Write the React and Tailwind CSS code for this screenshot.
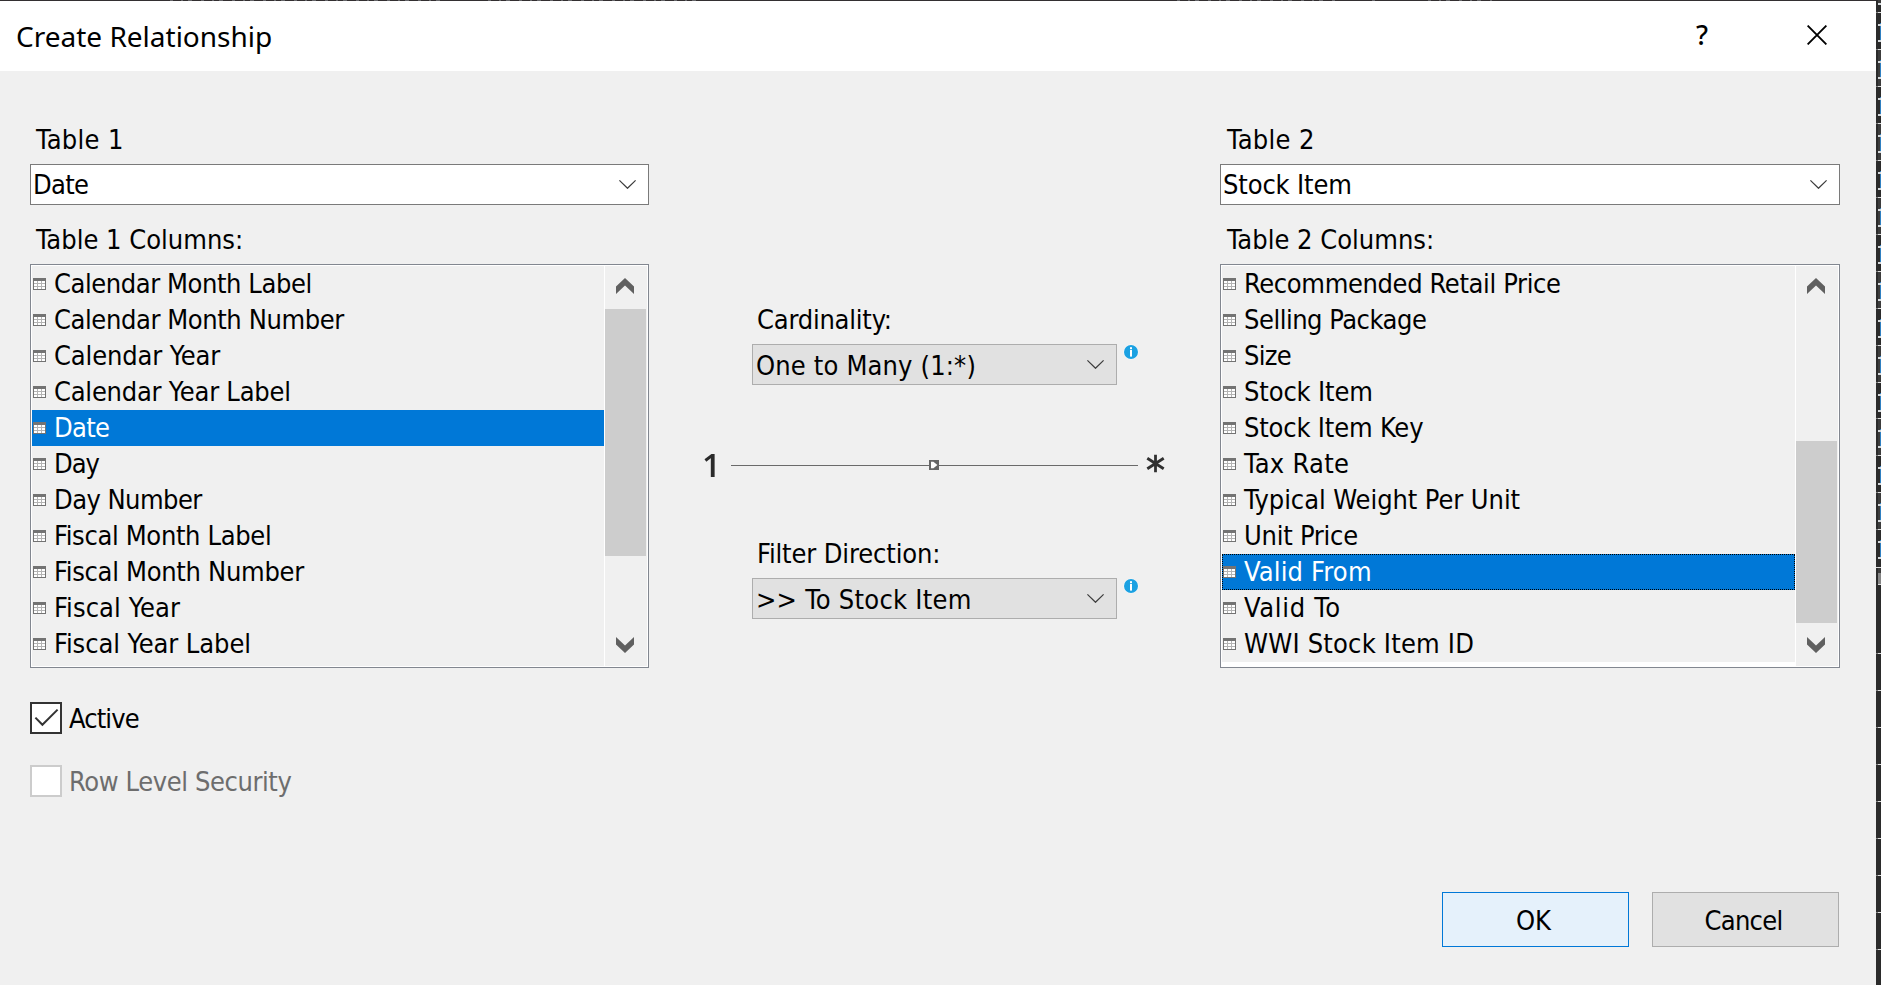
const TABLE_1_COLUMNS = [
  { name: 'Calendar Month Label', tracking: 'tracking-[-0.43px]' },
  { name: 'Calendar Month Number', tracking: 'tracking-[-0.41px]' },
  { name: 'Calendar Year', tracking: 'tracking-[-0.14px]' },
  { name: 'Calendar Year Label', tracking: 'tracking-[-0.24px]' },
  { name: 'Date', tracking: 'tracking-[-0.7px]', selected: true },
  { name: 'Day', tracking: 'tracking-[-1px]' },
  { name: 'Day Number', tracking: 'tracking-[-0.55px]' },
  { name: 'Fiscal Month Label', tracking: 'tracking-[-0.34px]' },
  { name: 'Fiscal Month Number', tracking: 'tracking-[-0.3px]' },
  { name: 'Fiscal Year', tracking: 'tracking-[0.08px]' },
  { name: 'Fiscal Year Label', tracking: 'tracking-[-0.09px]' },
];

const TABLE_2_COLUMNS = [
  { name: 'Recommended Retail Price', tracking: 'tracking-[-0.37px]' },
  { name: 'Selling Package', tracking: 'tracking-[-0.49px]' },
  { name: 'Size', tracking: 'tracking-[-0.7px]' },
  { name: 'Stock Item', tracking: 'tracking-[-0.14px]' },
  { name: 'Stock Item Key', tracking: 'tracking-[-0.18px]' },
  { name: 'Tax Rate', tracking: 'tracking-[0.3px]' },
  { name: 'Typical Weight Per Unit', tracking: 'tracking-[-0.08px]' },
  { name: 'Unit Price', tracking: 'tracking-[-0.25px]' },
  { name: 'Valid From', tracking: 'tracking-[0.18px]', selected: true, focused: true },
  { name: 'Valid To', tracking: 'tracking-[0.7px]' },
  { name: 'WWI Stock Item ID', tracking: 'tracking-[0.2px]' },
];

function Label({ children, className = '' }) {
  return <div className={`h-9 whitespace-nowrap leading-9 ${className}`}>{children}</div>;
}

function ComboChevron() {
  return (
    <svg className="mr-3 shrink-0" width="17" height="9" viewBox="0 0 17 9" fill="none">
      <path d="M0.4 0.4 L8.5 8.3 L16.6 0.4" stroke="#3c3c3c" strokeWidth="1.2" />
    </svg>
  );
}

function ComboBox({ value, className = '', textClassName = '' }) {
  return (
    <div className={`flex h-[41px] items-center justify-between border ${className}`}>
      <span className={`whitespace-nowrap leading-9 ${textClassName}`}>{value}</span>
      <ComboChevron />
    </div>
  );
}

function TableIcon() {
  return (
    <svg className="ml-px mt-3 shrink-0" width="13" height="12" viewBox="0 0 13 12" shapeRendering="crispEdges">
      <rect width="13" height="12" fill="#737373" />
      <rect x="1" y="3" width="11" height="8" fill="#b4b4b4" />
      <path
        d="M1 3h3v2H1zM5 3h3v2H5zM9 3h3v2H9zM1 6h3v2H1zM5 6h3v2H5zM9 6h3v2H9zM1 9h3v2H1zM5 9h3v2H5zM9 9h3v2H9z"
        fill="#ffffff"
      />
    </svg>
  );
}

function ScrollArrow({ direction }) {
  const points = direction === 'up' ? '9,0 18,8.5 18,16 9,7.5 0,16 0,8.5' : '9,16 18,7.5 18,0 9,8.5 0,0 0,7.5';
  return (
    <svg width="18" height="16" viewBox="0 0 18 16">
      <polygon points={points} fill="#606060" />
    </svg>
  );
}

function ScrollBar({ thumbClassName }) {
  return (
    <div className="flex w-[42px] shrink-0 flex-col bg-[#f0f0f0]">
      <div className="flex h-[43px] shrink-0 justify-center pr-[2px] pt-3">
        <ScrollArrow direction="up" />
      </div>
      <div className="flex-1">
        <div className={`w-[41px] bg-[#cdcdcd] ${thumbClassName}`} />
      </div>
      <div className="flex h-[43px] shrink-0 justify-center pr-[2px] pt-[14px]">
        <ScrollArrow direction="down" />
      </div>
    </div>
  );
}

function ColumnList({ columns, thumbClassName, trailingClassName }) {
  return (
    <div className="flex h-[404px] border border-[#828790] bg-white p-px">
      <div className="mr-px flex min-w-0 flex-1 flex-col">
        {columns.map((column) => (
          <div
            key={column.name}
            className={`relative flex h-9 ${column.selected ? 'bg-[#0078d7] text-white' : 'bg-[#f0f0f0]'}`}
          >
            <TableIcon />
            <span className={`ml-2 whitespace-nowrap leading-9 ${column.tracking}`}>{column.name}</span>
            {column.focused && <div className="absolute inset-0 border border-dotted border-black" />}
          </div>
        ))}
        <div className={`flex-1 ${trailingClassName}`} />
      </div>
      <ScrollBar thumbClassName={thumbClassName} />
    </div>
  );
}

function InfoIcon() {
  return (
    <svg className="ml-[6px] shrink-0" width="16" height="16" viewBox="0 0 16 16">
      <circle cx="8" cy="8" r="7.6" fill="#f8fafb" />
      <circle cx="8" cy="8" r="7" fill="#1ba1e2" />
      <rect x="7" y="3.2" width="2" height="2" fill="#fff" />
      <rect x="7" y="6" width="2" height="6.6" fill="#fff" />
    </svg>
  );
}

function Field({ label, labelTracking, value, valueClassName, className }) {
  return (
    <div className={`ml-[103px] ${className}`}>
      <Label className={`ml-[5px] ${labelTracking}`}>{label}</Label>
      <div className="mt-[6px] flex">
        <ComboBox
          value={value}
          className="w-[365px] border-[#adadad] bg-[#e1e1e1]"
          textClassName={valueClassName}
        />
        <InfoIcon />
      </div>
    </div>
  );
}

function RelationshipLine() {
  return (
    <div className="ml-[53px] mt-[67px] flex h-[26px] items-center">
      <span className="w-[29px] font-['Open_Sans',sans-serif] text-[33px] font-semibold leading-[26px] tracking-tight text-[#2a2a2a] blur-[0.7px]">
        1
      </span>
      <div className="flex w-[407px] items-center">
        <div className="h-px w-[198px] bg-[#6a6a6a]" />
        <svg width="10" height="10" viewBox="0 0 10 10">
          <rect width="10" height="10" fill="#666" />
          <path d="M2 1.8H4.4L8.4 5L4.4 8.2H2Z" fill="#fff" />
        </svg>
        <div className="h-px flex-1 bg-[#6a6a6a]" />
      </div>
      <svg className="-mt-[3px] ml-2 blur-[0.7px]" width="19" height="19" viewBox="0 0 19 19" fill="none">
        <path d="M9.5 0.8V18.2M1.3 4.2L17.7 14.8M17.7 4.2L1.3 14.8" stroke="#303030" strokeWidth="2.8" />
      </svg>
    </div>
  );
}

/* Sliver of the code editor that is visible beside the dialog. */
function EditorEdge() {
  const rows = Array.from({ length: 15 }, (_, i) => i);
  const emptyRows = Array.from({ length: 9 }, (_, i) => i);
  return (
    <svg className="shrink-0" width="5" height="985" viewBox="0 0 5 985" shapeRendering="crispEdges">
      <rect width="5" height="985" fill="#2b2b2b" />
      <rect x="2" width="3" height="4" fill="#3c3c3c" />
      <rect x="2" y="3" width="3" height="2" fill="#d5d9dc" />
      {rows.map((i) => {
        const y = Math.round(12 + 36.95 * i);
        return (
          <g key={i}>
            {i % 2 === 1 && <rect x="2" y={y} width="3" height="37" fill="#3c3c3c" />}
            <rect y={y} width="2" height="1" fill="#777" />
            <rect x="2" y={y} width="3" height="1" fill="#dcdcdc" />
            <rect x="4" y={y + 11} width="1" height="17" fill="#2f7fc0" />
            <rect x="2" y={y + 12} width="3" height="2" fill="#d5d9dc" />
            <rect x="2" y={y + 28} width="3" height="2" fill="#d5d9dc" />
          </g>
        );
      })}
      <rect y="567" width="5" height="1" fill="#dcdcdc" />
      <rect x="2" y="568" width="3" height="5" fill="#3c3c3c" />
      <rect x="2" y="573" width="3" height="11" fill="#858585" />
      <rect y="584" width="5" height="401" fill="#2b2b2b" />
      <rect x="2" y="584" width="3" height="1" fill="#dcdcdc" />
      {emptyRows.map((i) => (
        <g key={i}>
          <rect y={653 + 37 * i} width="2" height="1" fill="#777" />
          <rect x="2" y={653 + 37 * i} width="3" height="1" fill="#dcdcdc" />
        </g>
      ))}
    </svg>
  );
}

function TitleBar() {
  return (
    <header className="flex h-[70px] shrink-0 justify-between bg-white pl-4 font-['Noto_Sans',sans-serif]">
      <h1 className="mt-[17px] whitespace-nowrap text-[28px] leading-9">Create Relationship</h1>
      <div className="flex">
        <span className="mr-[99px] mt-4 text-[27px] font-medium leading-9">?</span>
        <svg className="mr-[49px] mt-6" width="20" height="20" viewBox="0 0 20 20" fill="none">
          <path d="M0.6 0.6L19.4 19.4M19.4 0.6L0.6 19.4" stroke="#000" strokeWidth="1.9" />
        </svg>
      </div>
    </header>
  );
}

export default function App() {
  return (
    <div className="flex h-[985px] w-[1881px] overflow-hidden bg-[#2b2b2b] font-['DejaVu_Sans_Condensed','DejaVu_Sans',sans-serif] text-[27px] text-black">
      <div className="flex w-[1876px] flex-col">
        <svg className="shrink-0" width="1876" height="1" viewBox="0 0 1876 1" shapeRendering="crispEdges">
          <rect width="1876" height="1" fill="#332f31" />
          <path
            d="M170 .5H442M488 .5H700M1177 .5H1340M1372 .5H1382M1428 .5H1492"
            stroke="#66666a"
            strokeDasharray="3 8 2 5 4 9"
          />
        </svg>
        <TitleBar />
        <main className="flex flex-1 flex-col bg-[#f0f0f0] pt-[51px]">
          <div className="flex h-[675px]">
            <section className="ml-[30px] w-[619px]">
              <Label className="ml-[6px] tracking-[0.3px]">Table 1</Label>
              <ComboBox
                value="Date"
                className="mt-[6px] border-[#7a7a7a] bg-white"
                textClassName="ml-[2px] tracking-[-0.7px]"
              />
              <Label className="ml-[6px] mt-[17px]">Table 1 Columns:</Label>
              <div className="mt-[6px]">
                <ColumnList
                  columns={TABLE_1_COLUMNS}
                  thumbClassName="h-[247px]"
                  trailingClassName="bg-[#f0f0f0]"
                />
              </div>
              <div className="mt-[34px] flex h-8">
                <div className="size-8 border-2 border-[#333] bg-white">
                  <svg width="28" height="28" viewBox="0 0 28 28" fill="none">
                    <path d="M3.4 13.6L10.4 20.8L25.6 5.6" stroke="#333" strokeWidth="2" />
                  </svg>
                </div>
                <span className="-mt-px ml-[7px] leading-9 tracking-[-0.9px]">Active</span>
              </div>
              <div className="mt-[31px] flex h-8">
                <div className="size-8 border-2 border-[#ccc] bg-white" />
                <span className="-mt-px ml-[7px] whitespace-nowrap leading-9 tracking-[-0.4px] text-[#6d6d6d]">
                  Row Level Security
                </span>
              </div>
            </section>

            <section className="w-[571px]">
              <Field
                className="mt-[180px]"
                label="Cardinality:"
                labelTracking="tracking-[-0.22px]"
                value="One to Many (1:*)"
                valueClassName="ml-[3px] mt-[3px] tracking-[0.16px]"
              />
              <RelationshipLine />
              <Field
                className="mt-[58px]"
                label="Filter Direction:"
                labelTracking="tracking-[-0.13px]"
                value=">> To Stock Item"
                valueClassName="ml-[3px] mt-[3px] tracking-[0.26px]"
              />
            </section>

            <section className="w-[620px]">
              <Label className="ml-[7px] tracking-[0.3px]">Table 2</Label>
              <ComboBox
                value="Stock Item"
                className="mt-[6px] border-[#7a7a7a] bg-white"
                textClassName="ml-[2px] tracking-[-0.14px]"
              />
              <Label className="ml-[7px] mt-[17px]">Table 2 Columns:</Label>
              <div className="mt-[6px]">
                <ColumnList
                  columns={TABLE_2_COLUMNS}
                  thumbClassName="mt-[132px] h-[182px]"
                  trailingClassName="bg-white"
                />
              </div>
            </section>
          </div>

          <footer className="mt-[95px] flex justify-end gap-[23px] pr-[37px]">
            <button className="h-[55px] w-[187px] border border-[#0078d7] bg-[#e5f1fb] pr-[4px] pt-[3px]">OK</button>
            <button className="h-[55px] w-[187px] border border-[#adadad] bg-[#e1e1e1] pr-[4px] pt-[3px] tracking-[-0.7px]">
              Cancel
            </button>
          </footer>
        </main>
      </div>
      <EditorEdge />
    </div>
  );
}
